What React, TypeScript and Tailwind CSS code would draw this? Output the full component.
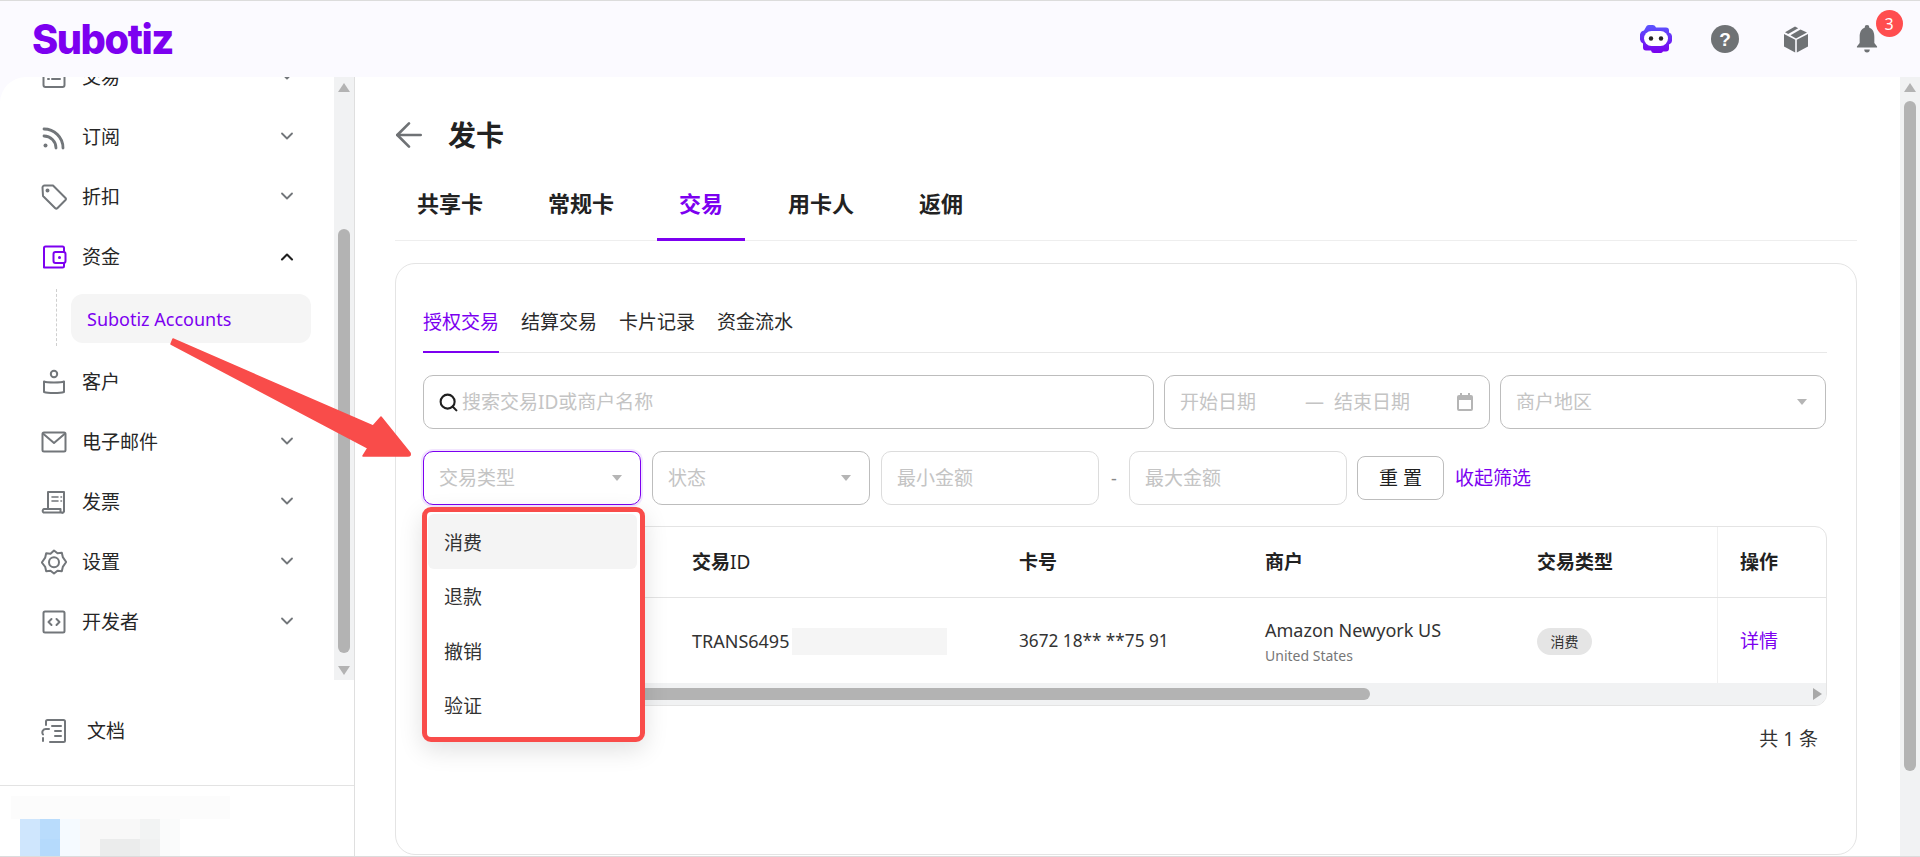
import { ArrowLeft, ChevronDown, ChevronUp, Search } from "lucide-react";
import type { ReactNode } from "react";

const iconClass = "h-[26px] w-[26px] text-[#72767a]";

function Svg({ children, className = iconClass }: { children: ReactNode; className?: string }) {
  return (
    <svg viewBox="0 0 26 26" fill="none" stroke="currentColor" strokeWidth="2" strokeLinecap="round" strokeLinejoin="round" className={className}>
      {children}
    </svg>
  );
}

const icons: Record<string, ReactNode> = {
  list: (
    <Svg>
      <rect x="2.5" y="3" width="21" height="20" rx="2" />
      <path d="M7 10h1M11 10h8M7 15h1M11 15h8" />
    </Svg>
  ),
  rss: (
    <Svg>
      <path d="M3 5c10 0 19 8 19 19" strokeWidth="2.8" />
      <path d="M3 12c6.500 0 12 5.500 12 12" strokeWidth="2.8" />
      <circle cx="4.500" cy="21.500" r="2" fill="currentColor" stroke="none" />
    </Svg>
  ),
  tag: (
    <Svg>
      <path d="M1.500 3.500a2 2 0 0 1 2-2h8.500l12.500 12.500a1.500 1.500 0 0 1 0 2l-8.200 8.200a1.500 1.500 0 0 1-2 0L2 12z" />
      <circle cx="6.500" cy="6.500" r="1" fill="currentColor" />
    </Svg>
  ),
  wallet: (
    <Svg className="h-[26px] w-[26px] text-[#7c00f0]">
      <path d="M23 8V4a1.500 1.500 0 0 0-1.500-1.500h-17A1.500 1.500 0 0 0 3 4v19.500h18.500A1.500 1.500 0 0 0 23 22v-3" />
      <rect x="12.500" y="8" width="12" height="11" rx="2" />
      <circle cx="18.500" cy="13.500" r="1.500" fill="currentColor" stroke="none" />
    </Svg>
  ),
  user: (
    <Svg>
      <circle cx="13" cy="5" r="3.200" />
      <path d="M3 12.500c3 1.300 17 1.300 20 0v10.500c-4 1.400-16 1.400-20 0z" />
    </Svg>
  ),
  mail: (
    <Svg>
      <rect x="1.500" y="3.500" width="23" height="19" rx="1.500" />
      <path d="M2.500 5l10.500 9 10.500-9" />
    </Svg>
  ),
  receipt: (
    <Svg>
      <path d="M7 20V3h16v19.500a1.800 1.800 0 0 1-3.500 0V20H3a2 2 0 0 0-.5 3.500h19" />
      <path d="M11 8h6M20 8h.5M11 12h6M20 12h.5" strokeWidth="1.600" />
    </Svg>
  ),
  gear: (
    <Svg>
      <path d="M13 1.500l3.500 2.800 4.300-.500 1 4.300 3.400 4.900-3.400 4.900-1 4.300-4.300-.500-3.500 2.800-3.500-2.800-4.300.500-1-4.300L.8 13.500l3.400-4.900 1-4.300 4.300.500z" />
      <circle cx="13" cy="13.300" r="5" />
    </Svg>
  ),
  code: (
    <Svg>
      <rect x="2.500" y="2.500" width="21" height="21" rx="1.500" />
      <path d="M10.500 10l-3 3 3 3M15.500 10l3 3-3 3" />
    </Svg>
  ),
  docs: (
    <Svg>
      <path d="M5 7V3.500A1.500 1.500 0 0 1 6.500 2h16A1.500 1.500 0 0 1 24 3.500v19a1.500 1.500 0 0 1-1.500 1.500H9" />
      <path d="M11 8h9M14 13h6M14 18h6" />
      <path d="M8 11H5a3.500 3.500 0 0 0-3 5.500M2 20v3" />
    </Svg>
  ),
};

function NavRow({ icon, label, chevron = "down" }: { icon: string; label: string; chevron?: "down" | "up" | "none" }) {
  return (
    <div className="flex h-[60px] items-center pl-[41px] pr-[37px]">
      <span className="flex w-[41px] shrink-0">{icons[icon]}</span>
      <span className="flex-1 text-[19px] text-[#262626]">{label}</span>
      {chevron === "up" && <ChevronUp className="mb-[1px] h-[20px] w-[20px] text-[#1f1f1f]" strokeWidth={2.5} />}
      {chevron === "down" && <ChevronDown className="mb-[3px] h-[20px] w-[20px] text-[#72767a]" strokeWidth={2.2} />}
    </div>
  );
}

function ScrollArrow({ dir }: { dir: "up" | "down" }) {
  return (
    <div className="flex h-[20px] items-center justify-center">
      <div
        className={
          dir === "up"
            ? "h-0 w-0 border-x-[6px] border-b-[9px] border-x-transparent border-b-[#b3b3b3]"
            : "h-0 w-0 border-x-[6px] border-t-[9px] border-x-transparent border-t-[#b3b3b3]"
        }
      />
    </div>
  );
}

function Sidebar() {
  const mosaic = [
    ["#cfe6fd", "#b9dcfc", "#f5faff", "#f8f8f8", "#f8f8f8", "#f8f8f8", "#f2f3f3", "#fafbfb"],
    ["#cfe6fd", "#b5dafc", "#f5faff", "#f8f8f8", "#ebecec", "#ebecec", "#f0f1f1", "#fafbfb"],
  ];
  return (
    <aside className="flex w-[355px] shrink-0 flex-col overflow-hidden rounded-tl-[26px] border-r border-[#dfdfdf] bg-white">
      <div className="flex h-[603px] shrink-0">
        <nav className="min-w-0 flex-1 overflow-hidden">
          <div className="-mt-[30px]">
            <NavRow icon="list" label="交易" />
            <NavRow icon="rss" label="订阅" />
            <NavRow icon="tag" label="折扣" />
            <NavRow icon="wallet" label="资金" chevron="up" />
            <div className="mb-[9px] flex h-[56px] pl-[56px] pt-[2px]">
              <div className="h-[57px] border-l border-dashed border-[#cfcfcf]" />
              <div className="ml-[14px] mt-[5px] flex h-[49px] w-[240px] items-center rounded-[12px] bg-[#f5f5f5] pl-[16px] pt-[2px] text-[18px] text-[#7c00f0]">
                Subotiz Accounts
              </div>
            </div>
            <NavRow icon="user" label="客户" chevron="none" />
            <NavRow icon="mail" label="电子邮件" />
            <NavRow icon="receipt" label="发票" />
            <NavRow icon="gear" label="设置" />
            <NavRow icon="code" label="开发者" />
          </div>
        </nav>
        <div className="flex w-[20px] shrink-0 flex-col bg-[#f1f2f3] px-[4px]">
          <ScrollArrow dir="up" />
          <div className="h-[20px] shrink-0" />
          <div className="mt-[112px] h-[424px] rounded-full bg-[#b3b3b3]" />
          <div className="mt-auto">
            <ScrollArrow dir="down" />
          </div>
        </div>
      </div>
      <div className="mt-[21px] flex h-[60px] shrink-0 items-center pl-[41px]">
        <span className="flex w-[46px] shrink-0">{icons.docs}</span>
        <span className="text-[19px] text-[#262626]">文档</span>
      </div>
      <div className="mt-[24px] shrink-0 border-t border-[#e3e3e3] px-[11px] pt-[10px]">
        <div className="h-[23px] w-[219px] bg-[#fcfcfc]" />
        <div className="ml-[9px] flex flex-col">
          {mosaic.map((row, i) => (
            <div key={i} className="flex h-[20px]">
              {row.map((color, j) => (
                <div key={j} className="w-[20px]" style={{ backgroundColor: color }} />
              ))}
            </div>
          ))}
        </div>
      </div>
    </aside>
  );
}

function Caret() {
  return <div className="h-0 w-0 border-x-[5px] border-t-[6px] border-x-transparent border-t-[#b5b5b5]" />;
}

function Dropdown() {
  return (
    <div className="absolute -left-px top-[56px] z-10 h-[235px] w-[223px] rounded-[9px] border-[5px] border-[#f94c4a] bg-white pl-[1px] pr-[3px] pt-[2px] shadow-[0_8px_24px_rgba(0,0,0,0.12)]">
      {["消费", "退款", "撤销", "验证"].map((item, i) => (
        <div
          key={item}
          className={
            i === 0
              ? "flex h-[54.500px] items-center rounded-[6px] bg-[#f4f4f4] pl-[16px] pt-[3px] text-[19px] text-[#333333]"
              : "flex h-[54.500px] items-center pl-[16px] pt-[3px] text-[19px] text-[#333333]"
          }
        >
          {item}
        </div>
      ))}
    </div>
  );
}

function Filters() {
  const boxClass = "flex h-[54px] items-center rounded-[10px] border border-[#bdbdbd] text-[19px] text-[#c4c4c4]";
  const lightBoxClass = "flex h-[54px] w-[218px] items-center rounded-[10px] border border-[#dcdcdc] pl-[15px] text-[19px] text-[#c4c4c4]";
  return (
    <>
      <div className="mt-[22px] flex gap-[10px]">
        <div className={`${boxClass} w-[731px] pl-[14px]`}>
          <Search className="mr-[3px] h-[21px] w-[21px] text-[#1f1f1f]" strokeWidth={2.4} />
          搜索交易ID或商户名称
        </div>
        <div className={`${boxClass} w-[326px] pl-[15px] pr-[16px]`}>
          <span>开始日期</span>
          <span className="ml-[49px]">—</span>
          <span className="ml-[10px]">结束日期</span>
          <svg viewBox="0 0 16 18" className="ml-auto h-[18px] w-[16px] text-[#b5b5b5]">
            <path d="M3 0h2v2h6V0h2v2h1a2 2 0 0 1 2 2v12a2 2 0 0 1-2 2H2a2 2 0 0 1-2-2V4a2 2 0 0 1 2-2h1zM2 7v9h12V7z" fill="currentColor" />
          </svg>
        </div>
        <div className={`${boxClass} w-[326px] justify-between pl-[15px] pr-[18px]`}>
          <span>商户地区</span>
          <Caret />
        </div>
      </div>
      <div className="mt-[22px] flex items-center">
        <div className="relative">
          <div className="flex h-[54px] w-[218px] items-center justify-between rounded-[10px] border border-[#7c00f0] pl-[15px] pr-[18px] text-[19px] text-[#c4c4c4] shadow-[0_0_0_2px_#f2e6ff]">
            <span>交易类型</span>
            <Caret />
          </div>
          <Dropdown />
        </div>
        <div className={`${boxClass} ml-[11px] w-[218px] justify-between pl-[15px] pr-[18px]`}>
          <span>状态</span>
          <Caret />
        </div>
        <div className={`${lightBoxClass} ml-[11px]`}>最小金额</div>
        <span className="w-[30px] text-center text-[18px] text-[#888888]">-</span>
        <div className={lightBoxClass}>最大金额</div>
        <button type="button" className="ml-[10px] h-[44px] w-[87px] rounded-[8px] border border-[#bdbdbd] text-[19px] text-[#1f1f1f]">
          重 置
        </button>
        <span className="ml-[11px] text-[19px] text-[#7c00f0]">收起筛选</span>
      </div>
    </>
  );
}

function TransactionTable() {
  const gridClass = "grid grid-cols-[268px_327px_246px_272px_180px_1fr]";
  return (
    <div className="mt-[21px] h-[180px] overflow-hidden rounded-[12px] border border-[#e4e4e4]">
      <div className={`${gridClass} h-[71px] items-center border-b border-[#e4e4e4] text-[19px] font-bold text-[#222222]`}>
        <span />
        <span>
          交易<span className="font-normal">ID</span>
        </span>
        <span>卡号</span>
        <span>商户</span>
        <span>交易类型</span>
        <span className="flex h-full items-center border-l border-[#f0f0f0] pl-[22px]">操作</span>
      </div>
      <div className={`${gridClass} h-[85px] items-center text-[18px] text-[#333333]`}>
        <span />
        <span className="flex items-center pt-[2px]">
          TRANS6495
          <span className="ml-[3px] h-[27px] w-[155px] bg-[#f5f5f5]" />
        </span>
        <span className="text-[17.200px]">3672 18** **75 91</span>
        <div className="flex flex-col pt-[2px]">
          <span className="leading-[24px]">Amazon Newyork US</span>
          <span className="mt-[4px] text-[14px] leading-[20px] text-[#777777]">United States</span>
        </div>
        <span>
          <span className="inline-flex h-[27px] w-[55px] items-center justify-center rounded-full bg-[#e5e5e5] text-[14px]">消费</span>
        </span>
        <span className="flex h-full items-center border-l border-[#f0f0f0] pl-[22px] pt-[2px] text-[19px] text-[#7c00f0]">详情</span>
      </div>
      <div className="flex h-[22px] items-center bg-[#f1f2f3] pr-[4px]">
        <div className="h-[12px] w-[946px] rounded-r-full bg-[#b3b3b3]" />
        <div className="ml-auto h-0 w-0 border-y-[6px] border-l-[9px] border-y-transparent border-l-[#a9a9a9]" />
      </div>
    </div>
  );
}

function MainPanel() {
  const tabs = ["共享卡", "常规卡", "交易", "用卡人", "返佣"];
  const subTabs = ["授权交易", "结算交易", "卡片记录", "资金流水"];
  return (
    <main className="flex min-w-0 flex-1 bg-white">
      <div className="min-w-0 flex-1 overflow-hidden pl-[40px] pr-[43px] pt-[40px]">
        <div className="flex h-[36px] items-center">
          <ArrowLeft className="-ml-[6px] h-[40px] w-[40px] text-[#6f7275]" strokeWidth={1.6} />
          <h1 className="ml-[19px] text-[28px] font-bold text-[#222222]">发卡</h1>
        </div>
        <div className="mt-[35px] flex gap-[21px] border-b border-[#eeeeee]">
          {tabs.map((tab) => (
            <div
              key={tab}
              className={
                tab === "交易"
                  ? "-mb-px border-b-[3px] border-[#7c00f0] px-[22px] pb-[20px] text-[22px] font-bold leading-[30px] text-[#7c00f0]"
                  : "px-[22px] pb-[20px] text-[22px] font-bold leading-[30px] text-[#222222]"
              }
            >
              {tab}
            </div>
          ))}
        </div>
        <section className="mt-[22px] h-[592px] rounded-[20px] border border-[#e4e4e4] pl-[27px] pr-[29px] pt-[45px]">
          <div className="flex gap-[22px] border-b border-[#e8e8e8]">
            {subTabs.map((tab, i) => (
              <div
                key={tab}
                className={
                  i === 0
                    ? "-mb-px border-b-2 border-[#7c00f0] pb-[16px] text-[19px] leading-[26px] text-[#7c00f0]"
                    : "pb-[15px] text-[19px] leading-[26px] text-[#2b2b2b]"
                }
              >
                {tab}
              </div>
            ))}
          </div>
          <Filters />
          <TransactionTable />
          <div className="mt-[19px] pr-[9px] text-right text-[19px] text-[#333333]">共 1 条</div>
        </section>
      </div>
      <div className="flex w-[20px] shrink-0 flex-col bg-[#f1f2f3] px-[4px]">
        <ScrollArrow dir="up" />
        <div className="mt-[4px] h-[670px] rounded-full bg-[#b3b3b3]" />
      </div>
    </main>
  );
}

function Header() {
  return (
    <header className="flex h-[76px] shrink-0 items-center justify-between pl-[32px] pr-[42px]">
      <span className="inline-block origin-left scale-x-[0.97] text-[41px] font-extrabold leading-none tracking-[-1.500px] text-[#7c00f0] font-['Inter',sans-serif]">Subotiz</span>
      <div className="flex items-center">
        <svg viewBox="0 0 34 30" className="h-[30px] w-[34px]">
          <defs>
            <linearGradient id="botFill" x1="0" y1="0" x2="0" y2="1">
              <stop offset="0" stopColor="#5a55ff" />
              <stop offset="1" stopColor="#7a00ee" />
            </linearGradient>
          </defs>
          <path d="M7 3a3 3 0 0 1 3-2h4a4 4 0 0 1 3 2.500h10a3 3 0 0 1 3 3v2a4 4 0 0 1 3 3.500v5a4 4 0 0 1-3 3.500v4a3 3 0 0 1-3 3h-3a3 3 0 0 1-3 1.500h-6a3 3 0 0 1-3-2.500h-5a3 3 0 0 1-3-3v-4a5 5 0 0 1-3-4v-5a5 5 0 0 1 4-4z" fill="url(#botFill)" />
          <rect x="5" y="7" width="24" height="15" rx="7.500" fill="#ffffff" />
          <circle cx="12" cy="14.500" r="2.200" fill="#262626" />
          <circle cx="22" cy="14.500" r="2.200" fill="#262626" />
        </svg>
        <svg viewBox="0 0 28 28" className="ml-[38px] h-[28px] w-[28px]">
          <circle cx="14" cy="14" r="14" fill="#6f7275" />
          <text x="14" y="20.500" textAnchor="middle" fontSize="19" fontWeight="700" fill="#ffffff" fontFamily="Liberation Sans, sans-serif">?</text>
        </svg>
        <svg viewBox="0 0 28 28" className="ml-[43px] h-[28px] w-[28px]">
          <path d="M13.200 14.800v12.700L2 21.500V9z" fill="#6f7275" />
          <path d="M14.800 14.800v12.700L26 21.500V9z" fill="#6f7275" />
          <path d="M3 7.300L13 1.500l3.200 1.700L6.200 9z" fill="#6f7275" />
          <path d="M8.500 10.200l10-5.800 6.500 3.200-11 6z" fill="#6f7275" />
        </svg>
        <div className="relative ml-[46px] h-[28px] w-[22px]">
          <svg viewBox="0 0 24 28" className="h-[28px] w-[22px]" preserveAspectRatio="none">
            <path d="M12 0a2.500 2.500 0 0 1 2.500 2.800C18.500 4 20 7.500 20 12v6l3 3.500v1H1v-1L4 18v-6c0-4.500 1.500-8 5.500-9.200A2.500 2.500 0 0 1 12 0z" fill="#6f7275" />
            <path d="M9 24.500h6a3 3 0 0 1-6 0z" fill="#6f7275" />
          </svg>
          <span className="absolute -right-[24.500px] -top-[15px] flex h-[27px] w-[27px] items-center justify-center rounded-full bg-[#ff4d4f] text-[16px] text-white">3</span>
        </div>
      </div>
    </header>
  );
}

export default function App() {
  return (
    <div className="relative flex h-[857px] w-[1920px] flex-col overflow-hidden border-y border-[#dcdcdc] bg-[#fbfaff] font-['Noto_Sans','Noto_Sans_CJK_SC',sans-serif]">
      <Header />
      <div className="flex min-h-0 flex-1">
        <Sidebar />
        <MainPanel />
      </div>
      <svg className="pointer-events-none absolute left-0 top-0 z-20 h-[857px] w-[1920px]" viewBox="0 0 1920 857">
        <path
          d="M173 338L373 425L381 416L410 452Q411 455 408 455L363 455L368 447L171 343Z"
          fill="#f94c4a"
          stroke="#f94c4a"
          strokeWidth="1.500"
          strokeLinejoin="round"
        />
      </svg>
    </div>
  );
}
